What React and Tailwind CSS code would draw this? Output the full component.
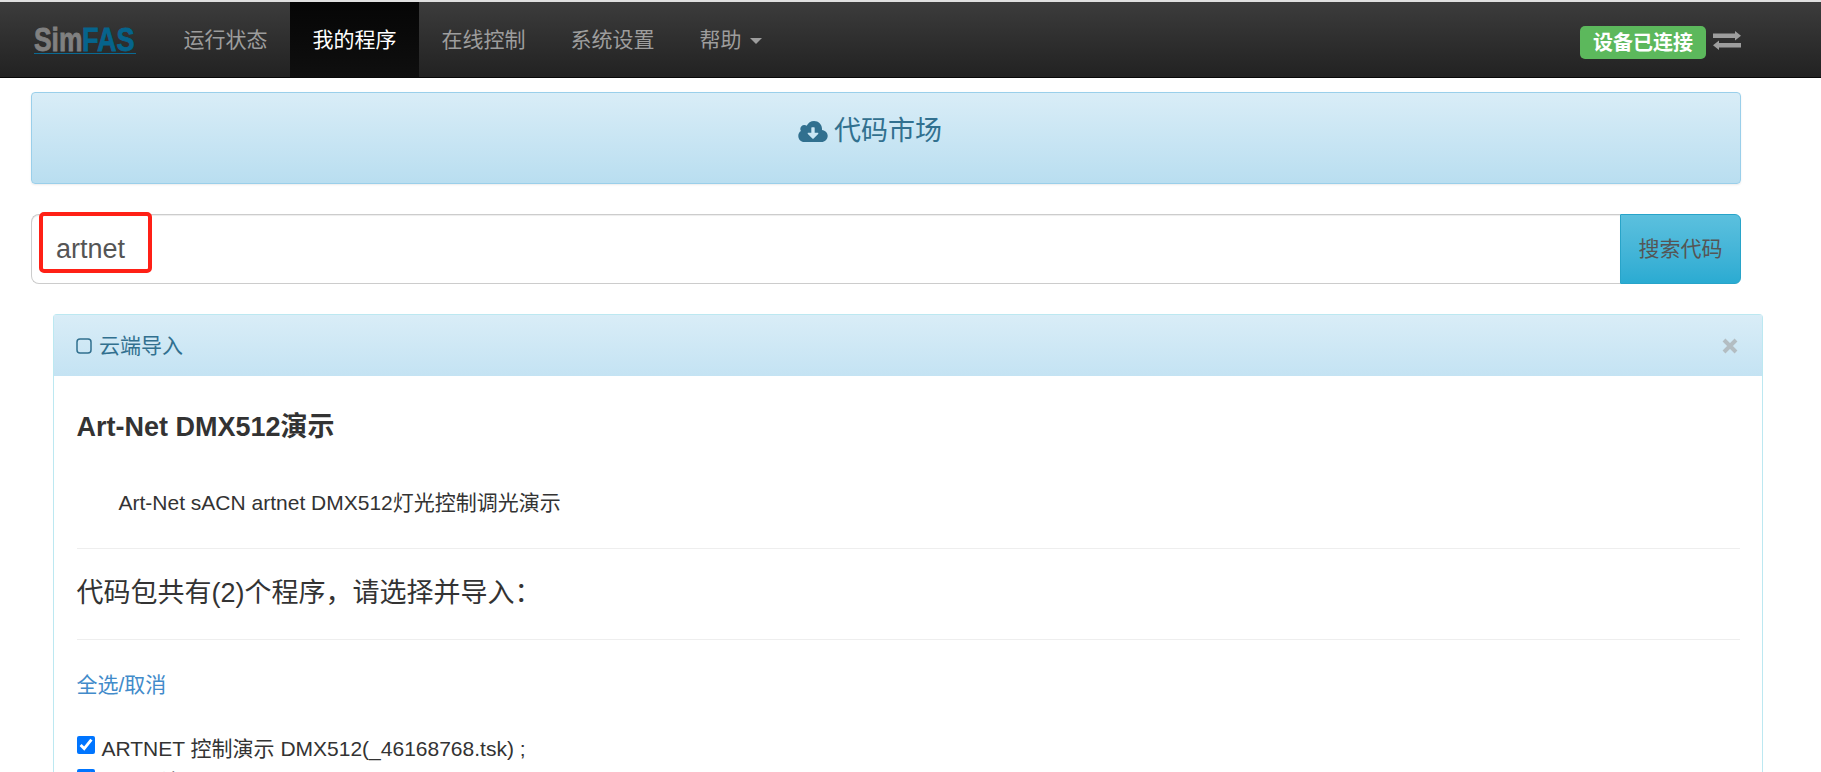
import React from 'react';

function Nav({ children, active }) {
  return (
    <a className={active
      ? "flex items-center h-full px-[22.5px] bg-gradient-to-b from-[#060606] to-[#0f0f0f] text-white text-[21px]"
      : "flex items-center h-full px-[22.5px] text-[#9d9d9d] text-[21px]"}>
      {children}
    </a>
  );
}

function FileRow({ children, className }) {
  return (
    <label className={"flex items-start h-[33px] text-[21px] leading-[32px] " + className}>
      <input type="checkbox" defaultChecked className="w-[18px] h-[18px] mt-[3px] mr-[7px] shrink-0 accent-[#0075ff]" />
      {children}
    </label>
  );
}

export default function App() {
  return (
    <div className="w-[1821px] h-[772px] overflow-hidden bg-white text-[#333] font-['Liberation_Sans','Noto_Sans_CJK_SC',sans-serif]">
      {/* navbar */}
      <div className="h-[78px] border-t-2 border-t-[#e0e0e0] border-b border-b-[#080808] bg-gradient-to-b from-[#3c3c3c] to-[#222] flex items-center">
        <div className="w-[161px] h-full flex items-center pl-[34px]">
          <span className="mt-[2px] w-[102px] h-[27px] border-b border-[#0a6a94] flex text-[33px] leading-[25px] font-bold [-webkit-text-stroke:0.8px]">
            <span className="block w-[48px] origin-left scale-x-[.8] text-[#808080]">Sim</span>
            <span className="block w-[54px] origin-left scale-x-[.82] text-[#06648c]">FAS</span>
          </span>
        </div>
        <div className="flex h-full">
          <Nav>运行状态</Nav>
          <Nav active>我的程序</Nav>
          <Nav>在线控制</Nav>
          <Nav>系统设置</Nav>
          <Nav>
            帮助
            <span className="ml-[8px] mt-[3px] border-t-[6px] border-t-[#9d9d9d] border-x-[6px] border-x-transparent" />
          </Nav>
        </div>
        <div className="ml-auto flex items-center pr-[80px]">
          <span className="h-[33px] w-[126px] mt-[6px] rounded-[5px] bg-[#5cb85c] text-white font-bold text-[20px] flex items-center justify-center">设备已连接</span>
          <svg className="ml-[7px] mt-[2px]" width="28" height="19.500" viewBox="0 0 28 19.500" fill="#9d9d9d">
            <path d="M0 2.500H22V0L28 4.750 22 9.500V7H0z" />
            <path d="M28 12H6V9.500L0 14.250 6 19V16.500H28z" />
          </svg>
        </div>
      </div>

      <div className="pl-[31px] pr-[80px]">
        {/* title bar */}
        <div className="mt-[14px] h-[92px] pb-[14px] pr-[32px] rounded-[4px] border border-[#9acfea] bg-gradient-to-b from-[#d9edf7] to-[#b9def0] shadow-[0_1px_2px_rgba(0,0,0,0.08)] flex items-center justify-center text-[#31708f] text-[27px]">
          <svg className="mr-[6px]" width="30" height="21" viewBox="0 0 28 20" fill="#31708f">
            <path fillRule="evenodd" d="M22.500 8.500C22.600 8.200 22.600 7.900 22.600 7.500 22.600 3.400 19.200 0 15 0 11.900 0 9.200 1.900 8 4.600 7.400 4.100 6.600 3.800 5.700 3.800 3.600 3.800 1.900 5.500 1.900 7.600 1.900 8.300 2.100 9 2.500 9.600 1 10.500 0 12.200 0 14.200 0 17.400 2.500 20 5.700 20H22c3.300 0 6-2.700 6-6 0-2.800-2.300-5.100-5.500-5.500zM18.900 12.300l-4.500 4.500c-.2.200-.6.200-.8 0L9.100 12.300c-.4-.4-.1-1 .4-1H12.400V6.500c0-.3.300-.6.600-.6h2c.3 0 .6.300.6.600v4.800h2.900c.5 0 .8.600.4 1z" />
          </svg>
          代码市场
        </div>

        {/* search */}
        <div className="mt-[30px] flex h-[70px] relative">
          <div className="flex-1 border border-[#ccc] border-r-0 rounded-l-[8px] shadow-[inset_0_1px_1px_rgba(0,0,0,0.075)] flex items-center pl-[24px] text-[27px] text-[#555]">artnet</div>
          <div className="w-[121px] rounded-r-[6px] border border-[#28a4c9] bg-gradient-to-b from-[#5bc0de] to-[#2aabd2] flex items-center justify-center text-[21px] text-[#555]">搜索代码</div>
          <div className="absolute left-[8px] top-[-2px] w-[113px] h-[61px] border-[4px] border-[#ff2016] rounded-[5px]" />
        </div>

        {/* import panel */}
        <div className="mt-[30px] ml-[22px] mr-[-22px] h-[500px] rounded-t-[4px] border border-[#bce8f1] border-b-0">
          <div className="h-[61px] bg-gradient-to-b from-[#d9edf7] to-[#c4e3f3] flex items-center pl-[22px] pr-[24px] text-[21px] text-[#31708f]">
            <svg className="mr-[7px]" width="16" height="16" viewBox="0 0 16 16" fill="none" stroke="#31708f" strokeWidth="1.500">
              <rect x="1" y="1" width="14" height="14" rx="3" />
            </svg>
            云端导入
            <svg className="ml-auto" width="16" height="16" viewBox="0 0 16 16" stroke="#b3bdc2" strokeWidth="4">
              <path d="M2 2l12 12M14 2L2 14" />
            </svg>
          </div>
          <div className="pl-[22.500px] pr-[22px]">
            <h3 className="mt-[36px] text-[27px] leading-[30px] font-bold">Art-Net DMX512演示</h3>
            <p className="mt-[46px] pl-[42px] text-[21px] leading-[30px]">Art-Net sACN artnet DMX512灯光控制调光演示</p>
            <div className="mt-[30px] border-t border-[#eee]" />
            <h4 className="mt-[25px] text-[27px] leading-[38px]">代码包共有(2)个程序，请选择并导入：</h4>
            <div className="mt-[27px] border-t border-[#eee]" />
            <a className="block mt-[30px] text-[21px] leading-[30px] text-[#428bca]">全选/取消</a>
            <FileRow className="mt-[33px]">ARTNET 控制演示 DMX512(_46168768.tsk) ;</FileRow>
            <FileRow>artnet 演示</FileRow>
          </div>
        </div>
      </div>
    </div>
  );
}
